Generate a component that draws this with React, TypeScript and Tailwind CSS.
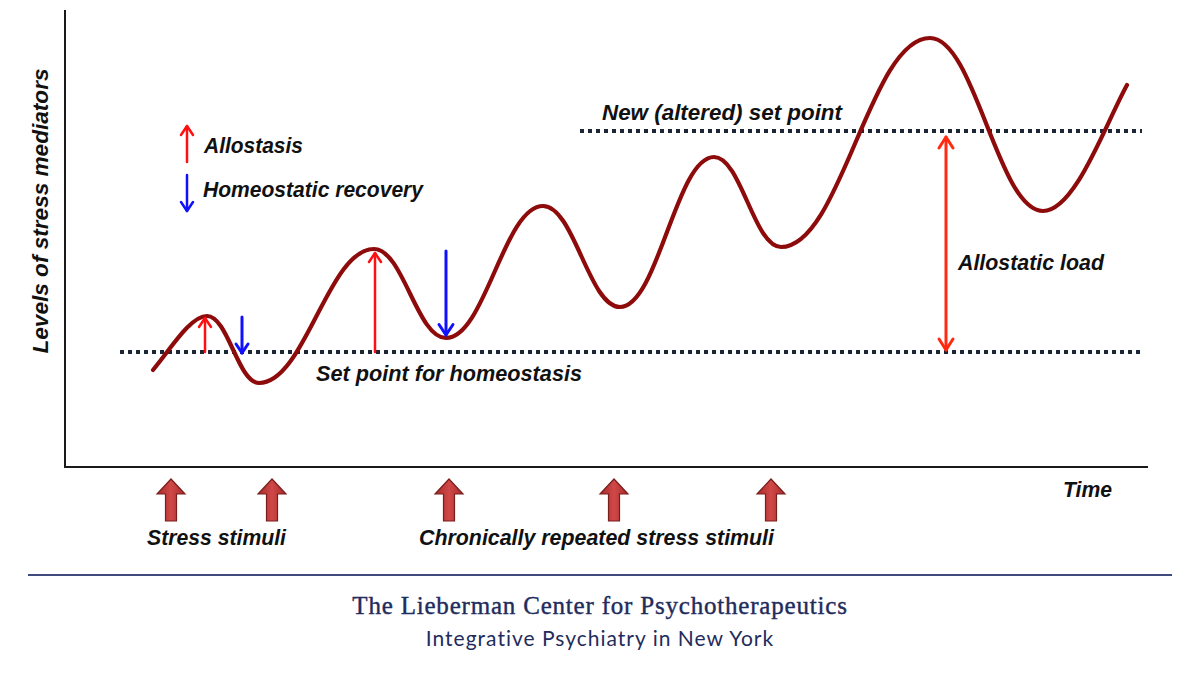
import React from "react";

const CURVE =
  "M153 370 C170 350 190 316 207 316 C228 316 238 383 259 383 C305 383 328 249 374 249 C403 249 417 338 446 338 C485 338 504 206 543 206 C574 206 589 307 620 307 C658 307 676 157 714 157 C741 157 754 247 781 247 C841 247 870 38 930 38 C975 38 998 211 1043 211 C1075 211 1105 125 1127 85";

const stimuli = [171, 272, 449, 614, 771];

function Arrow({ x, y1, y2, color, w = 2.5, head = 6 }: { x: number; y1: number; y2: number; color: string; w?: number; head?: number }) {
  const dir = y2 < y1 ? 1 : -1;
  return (
    <g stroke={color} strokeWidth={w} fill="none" strokeLinecap="round" strokeLinejoin="round">
      <line x1={x} y1={y1} x2={x} y2={y2} />
      <polyline points={`${x - head},${y2 + dir * head * 1.5} ${x},${y2} ${x + head},${y2 + dir * head * 1.5}`} />
    </g>
  );
}

type Label = { t: string; x: number; y: number; w: number };
const labels: Label[] = [
  { t: "Allostasis", x: 204, y: 153, w: 99 },
  { t: "Homeostatic recovery", x: 203, y: 197, w: 220 },
  { t: "Set point for homeostasis", x: 316, y: 381, w: 266 },
  { t: "New (altered) set point", x: 602, y: 120, w: 240 },
  { t: "Allostatic load", x: 958, y: 270, w: 146 },
  { t: "Time", x: 1063, y: 497, w: 49 },
  { t: "Stress stimuli", x: 147, y: 545, w: 139 },
  { t: "Chronically repeated stress stimuli", x: 419, y: 545, w: 355 },
];

export default function App() {
  const font = "'Liberation Sans', Arial, sans-serif";
  return (
    <div className="w-[1200px] h-[690px] bg-white flex flex-col overflow-hidden">
      <svg width="1200" height="574" viewBox="0 0 1200 574" className="block shrink-0">
        <defs>
          <linearGradient id="stim" x1="0" x2="1" y1="0" y2="0">
            <stop offset="0" stopColor="#a82a2a" />
            <stop offset="0.5" stopColor="#d04848" />
            <stop offset="1" stopColor="#a82a2a" />
          </linearGradient>
        </defs>
        {/* axes */}
        <line x1="65" y1="10" x2="65" y2="468" stroke="#1a1a1a" strokeWidth="2" />
        <line x1="64" y1="467" x2="1148" y2="467" stroke="#1a1a1a" strokeWidth="2" />

        {/* set point lines */}
        <line x1="120" y1="352" x2="1142" y2="352" stroke="#1b2636" strokeWidth="4" strokeDasharray="4 4" />
        <line x1="580" y1="131" x2="1142" y2="131" stroke="#1b2636" strokeWidth="4" strokeDasharray="4 4" />

        {/* curve */}
        <path d={CURVE} fill="none" stroke="#8e0b0b" strokeWidth="4.2" strokeLinecap="round" />

        {/* arrows on chart */}
        <Arrow x={187} y1={162} y2={126} color="#ff1010" />
        <Arrow x={187} y1={175} y2={211} color="#1010ff" w={2.5} />
        <Arrow x={205} y1={352} y2={318} color="#ff1010" />
        <Arrow x={242} y1={317} y2={353} color="#1010ff" w={3} />
        <Arrow x={375} y1={352} y2={253} color="#ff1010" />
        <Arrow x={446} y1={251} y2={335} color="#1010ff" w={3} head={7} />
        <g stroke="#ff2a10" strokeWidth="3" fill="none" strokeLinecap="round" strokeLinejoin="round">
          <line x1="946" y1="137" x2="946" y2="350" />
          <polyline points="939,148 946,137 953,148" />
          <polyline points="939,339 946,350 953,339" />
        </g>

        {/* stimulus block arrows */}
        {stimuli.map((cx) => (
          <polygon
            key={cx}
            points={`${cx},479 ${cx - 14},494 ${cx - 5.5},494 ${cx - 5.5},521 ${cx + 5.5},521 ${cx + 5.5},494 ${cx + 14},494`}
            fill="url(#stim)"
            stroke="#7a1d1d"
            strokeWidth="1.2"
            strokeLinejoin="miter"
          />
        ))}

        {/* labels */}
        <g fontFamily={font} fontWeight="700" fontStyle="italic" fill="#111111">
          <text
            x="0"
            y="0"
            fontSize="22.5"
            textAnchor="middle"
            textLength={285}
            lengthAdjust="spacingAndGlyphs"
            transform="translate(48 211) rotate(-90)"
          >
            Levels of stress mediators
          </text>
          {labels.map((l) => (
            <text key={l.t} x={l.x} y={l.y} fontSize="21.5" textLength={l.w} lengthAdjust="spacingAndGlyphs">
              {l.t}
            </text>
          ))}
        </g>
      </svg>

      <div className="mx-[28px] border-t-2 border-[#3e4b7c]" />
      <div className="flex flex-col items-center text-[#1f2c5c]">
        <div
          className="mt-[15px] text-[25px] leading-[30px] tracking-[0.8px] [-webkit-text-stroke:0.4px_#1f2c5c]"
          style={{ fontFamily: "'Liberation Serif', 'Times New Roman', serif" }}
        >
          The Lieberman Center for Psychotherapeutics
        </div>
        <div
          className="mt-[4px] text-[21px] leading-[26px] tracking-[1px]"
          style={{ fontFamily: "Lato, 'Open Sans', sans-serif" }}
        >
          Integrative Psychiatry in New York
        </div>
      </div>
    </div>
  );
}
